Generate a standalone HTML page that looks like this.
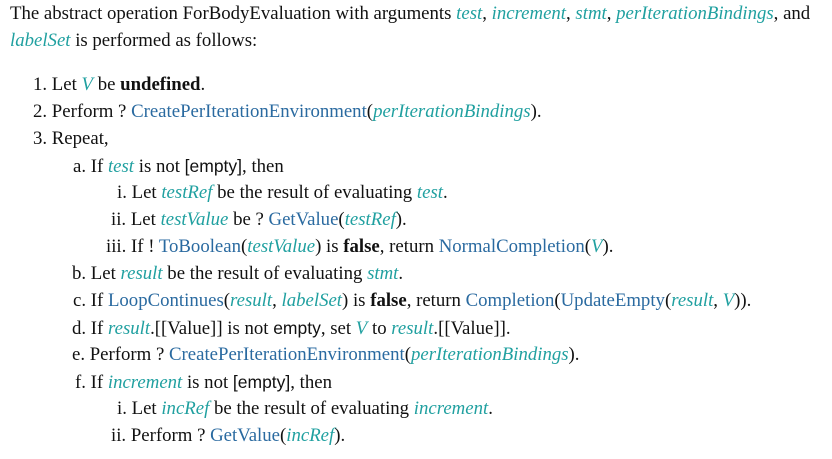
<!DOCTYPE html>
<html><head><meta charset="utf-8"><style>
body{margin:0;background:#fff;width:832px;height:459px;overflow:hidden;font-family:"Liberation Serif",serif;font-size:18.8px;color:#111;}
.l{position:absolute;white-space:nowrap;line-height:20px;}
.v{color:#20a0a0;font-style:italic;}
.a{color:#2a6aa0;}
b{font-weight:bold;}
.s{font-family:"Liberation Sans",sans-serif;font-size:17.5px;}
</style></head><body>
<div class="l" style="left:10px;top:4px;">The abstract operation ForBodyEvaluation with arguments <span class="v">test</span>, <span class="v">increment</span>, <span class="v">stmt</span>, <span class="v">perIterationBindings</span>, and</div>
<div class="l" style="left:10px;top:31px"><span class="v">labelSet</span> is performed as follows:</div>

<div class="l" style="left:33px;top:75px">1. Let <span class="v">V</span> be <b>undefined</b>.</div>
<div class="l" style="left:33px;top:102px">2. Perform ? <span class="a">CreatePerIterationEnvironment</span>(<span class="v">perIterationBindings</span>).</div>
<div class="l" style="left:33px;top:129px">3. Repeat,</div>
<div class="l" style="left:73px;top:156px">a. If <span class="v">test</span> is not <span class="s">[empty]</span>, then</div>
<div class="l" style="left:117px;top:183px">i. Let <span class="v">testRef</span> be the result of evaluating <span class="v">test</span>.</div>
<div class="l" style="left:111px;top:210px">ii. Let <span class="v">testValue</span> be ? <span class="a">GetValue</span>(<span class="v">testRef</span>).</div>
<div class="l" style="left:106px;top:237px">iii. If ! <span class="a">ToBoolean</span>(<span class="v">testValue</span>) is <b>false</b>, return <span class="a">NormalCompletion</span>(<span class="v">V</span>).</div>
<div class="l" style="left:72px;top:264px">b. Let <span class="v">result</span> be the result of evaluating <span class="v">stmt</span>.</div>
<div class="l" style="left:73px;top:291px">c. If <span class="a">LoopContinues</span>(<span class="v">result</span>, <span class="v">labelSet</span>) is <b>false</b>, return <span class="a">Completion</span>(<span class="a">UpdateEmpty</span>(<span class="v">result</span>, <span class="v">V</span>)).</div>
<div class="l" style="left:72px;top:318px">d. If <span class="v">result</span>.[[Value]] is not <span class="s">empty</span>, set <span class="v">V</span> to <span class="v">result</span>.[[Value]].</div>
<div class="l" style="left:72px;top:345px">e. Perform ? <span class="a">CreatePerIterationEnvironment</span>(<span class="v">perIterationBindings</span>).</div>
<div class="l" style="left:75px;top:372px">f. If <span class="v">increment</span> is not <span class="s">[empty]</span>, then</div>
<div class="l" style="left:117px;top:399px">i. Let <span class="v">incRef</span> be the result of evaluating <span class="v">increment</span>.</div>
<div class="l" style="left:111px;top:426px">ii. Perform ? <span class="a">GetValue</span>(<span class="v">incRef</span>).</div>
</body></html>
